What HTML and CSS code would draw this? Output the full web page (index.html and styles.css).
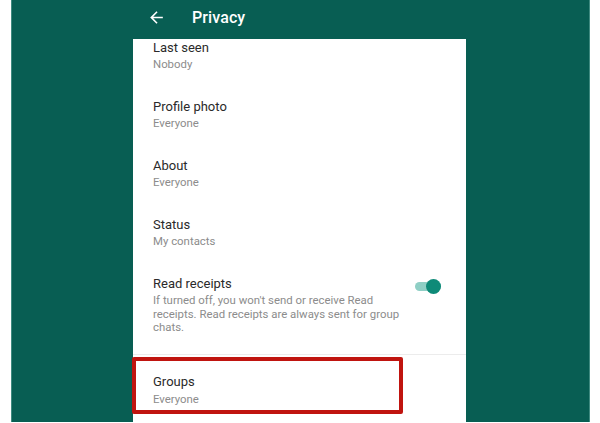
FILE: index.html
```html
<!DOCTYPE html>
<html>
<head>
<meta charset="utf-8">
<link rel="stylesheet" href="styles.css">
</head>
<body>
<div class="stage">
  <div class="appbar">
    <svg class="back" viewBox="0 0 24 24" width="19" height="19"><path fill="#fff" d="M20 11H7.83l5.59-5.59L12 4l-8 8 8 8 1.41-1.41L7.83 13H20v-2z"/></svg>
    <span class="title">Privacy</span>
  </div>
  <div class="panel">
    <div class="list">
      <div class="row">
        <div class="label">Last seen</div>
        <div class="value">Nobody</div>
      </div>
      <div class="row">
        <div class="label">Profile photo</div>
        <div class="value">Everyone</div>
      </div>
      <div class="row">
        <div class="label">About</div>
        <div class="value">Everyone</div>
      </div>
      <div class="row">
        <div class="label">Status</div>
        <div class="value">My contacts</div>
      </div>
      <div class="row row-toggle">
        <div class="text">
          <div class="label">Read receipts</div>
          <div class="desc">If turned off, you won't send or receive Read receipts. Read receipts are always sent for group chats.</div>
        </div>
        <div class="toggle"><span class="track"></span><span class="thumb"></span></div>
      </div>
      <div class="divider"></div>
      <div class="row row-groups">
        <div class="label">Groups</div>
        <div class="value">Everyone</div>
      </div>
    </div>
    <div class="highlight"></div>
  </div>
</div>
</body>
</html>
```
FILE: styles.css
```css
html, body {
  margin: 0;
  padding: 0;
  background: #ffffff;
  font-family: Roboto, "Noto Sans", Arial, sans-serif;
}
.stage {
  margin-left: 11px;
  width: 579px;
  height: 422px;
  background: #085e53;
  box-sizing: border-box;
  border-left: 1px solid #3f8a80;
  border-right: 1px solid #3f8a80;
  padding-left: 121px;
  display: flex;
  flex-direction: column;
  overflow: hidden;
}
.appbar {
  height: 39px;
  flex: none;
  display: flex;
  align-items: center;
  box-sizing: border-box;
  padding-bottom: 5px;
  color: #fff;
}
.back {
  margin-left: 14px;
  flex: none;
}
.title {
  margin-left: 26px;
  font-size: 16px;
  font-weight: 500;
  letter-spacing: 0.1px;
}
.panel {
  position: relative;
  width: 333px;
  flex: 1;
  background: #ffffff;
}
.list {
  margin-top: -13px;
  overflow: hidden;
}
.row {
  height: 59px;
  box-sizing: border-box;
  padding: 14px 18px 0 20px;
}
.label {
  font-size: 13px;
  line-height: 16px;
  color: #2a2a2a;
}
.value {
  margin-top: 1px;
  font-size: 11.4px;
  line-height: 14px;
  color: #8c8c8c;
}
.row-toggle {
  height: 92px;
  display: flex;
  align-items: flex-start;
}
.text {
  width: 252px;
  flex: none;
}
.desc {
  margin-top: 2px;
  font-size: 11.4px;
  line-height: 13.5px;
  color: #8c8c8c;
}
.toggle {
  position: relative;
  margin-left: 10px;
  margin-top: 3px;
  width: 33px;
  height: 15px;
  flex: none;
}
.track {
  position: absolute;
  left: 0;
  top: 3px;
  width: 26px;
  height: 9px;
  border-radius: 5px;
  background: #8fcfc5;
}
.thumb {
  position: absolute;
  left: 11px;
  top: 0;
  width: 15px;
  height: 15px;
  border-radius: 50%;
  background: #0e8a78;
}
.divider {
  height: 1px;
  background: #ececec;
}
.row-groups {
  padding-top: 19px;
}
.row-groups .value {
  margin-top: 2px;
}
.highlight {
  position: absolute;
  left: -1px;
  top: 318px;
  width: 271px;
  height: 57px;
  box-sizing: border-box;
  border: 4px solid #c0140f;
  border-radius: 2px;
}
```
